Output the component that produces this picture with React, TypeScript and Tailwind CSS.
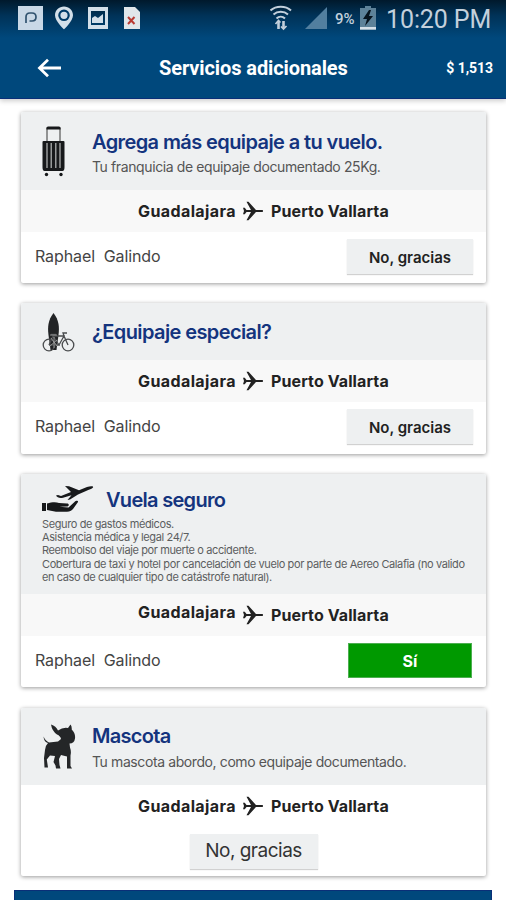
import type { ReactNode } from 'react'

function StatusBar() {
  return (
    <div className="flex h-[38px] items-start bg-linear-to-b from-[#00192c] via-[#003257] via-40% to-[#00487c] pt-[5px] pl-[17px] font-[Roboto,sans-serif] font-normal text-[#c3d0dc]">
      <svg className="h-[26px] w-[124px]" viewBox="0 0 124 26" fill="currentColor">
        <path d="M1 1h25v24H1z" fill="#c9d8e6" />
        <path d="M9 18v-6q0-4 4-4h2q4 0 4 4t-4 4h-2.500" fill="none" stroke="#31536f" strokeWidth="1.700" />
        <path d="M47 1.500c-5 0-9 3.800-9 8.700 0 6 9 14 9 14s9-8 9-14c0-4.900-4-8.700-9-8.700z" fill="#d3dfe9" />
        <circle cx="47" cy="10.300" r="4.700" fill="#d3dfe9" stroke="#003b68" strokeWidth="2.200" />
        <path d="M71 2h20v22H71zm3 4v14h14V6z" fillRule="evenodd" fill="#d3dfe9" />
        <path d="M75 18v-5l3-2 3 2 5-4v9z" fill="#d3dfe9" />
        <path d="M107 2h11l5 5v17h-16z" fill="#e0e6ea" />
        <path d="m111 12 6.500 7m0-7-6.500 7" stroke="#b83a33" strokeWidth="2" />
      </svg>
      <div className="flex-1" />
      <svg className="h-[26px] w-[58px]" viewBox="0 0 58 26" fill="none" stroke="#c3d0dc">
        <path d="M.5 5.500c5.500-5 15-5 20.500 0M3.500 9.500c4-3.600 10.500-3.600 14.500 0M6.500 13.500c2.500-2.300 6-2.300 8.500 0" strokeWidth="2" />
        <path d="M8.500 24v-8M13.500 16v7" strokeWidth="2.600" />
        <path d="m5.500 19 3-3.500 2 2M11 21.500l2.500 2.500 3-3" strokeWidth="1.600" />
        <path d="M57 2v22H35z" fill="#527f9f" stroke="none" />
      </svg>
      <span className="mt-[4px] ml-[7px] w-[23px] text-[15px] leading-[20px] font-medium tracking-[-0.1px] whitespace-nowrap">9%</span>
      <svg className="ml-[2px] h-[26px] w-4" viewBox="0 0 16 26">
        <path d="M5 1h6v2h5v22H0V3h5z" fill="#5d8299" />
        <path d="M0 22h16v2.500H0z" fill="#d5e0e8" />
        <path d="m9 5-6 9h4l-2 7 8-10H9l2-6z" fill="#06131d" />
      </svg>
      <span className="mt-[1px] mr-[14px] ml-[10px] w-[106px] text-[25px] leading-[28px] tracking-[-0.1px] whitespace-nowrap">10:20 PM</span>
    </div>
  )
}

function Header() {
  return (
    <header className="h-[99px] border-b border-[#0a2f78] bg-[#00487c] font-[Roboto,sans-serif] font-bold text-white shadow-[0_2px_5px_rgba(0,0,0,0.2)]">
      <StatusBar />
      <div className="flex h-[60px] items-center pr-[13px] pl-[37px]">
        <svg className="h-[20px] w-[25px]" viewBox="0 0 25 20" fill="none" stroke="currentColor" strokeWidth="2.800">
          <path d="M24 10H2.500M11 1.800 2.500 10l8.500 8.200" />
        </svg>
        <h1 className="ml-[97px] flex-1 text-[20px] tracking-[-0.1px] whitespace-nowrap">Servicios adicionales</h1>
        <span className="text-[14px] tracking-[-0.05px] whitespace-nowrap">$ 1,513</span>
      </div>
    </header>
  )
}

function SuitcaseIcon() {
  return (
    <svg className="h-[51px] w-[23px]" viewBox="0 0 23 51" fill="#17191b">
      <path d="M5 15V2h13v13" fill="none" stroke="#555" strokeWidth="1.200" />
      <path d="M4.500 3.500V2Q4.500.5 6 .5h11q1.500 0 1.500 1.500v1.500z" />
      <path d="M1.500 15h20q1 0 1 1v25q0 4-2 4h-18Q.5 45 .5 41V16q0-1 1-1z" />
      <path d="M5 17v25M9.200 17v25M13.800 17v25M18 17v25" stroke="#b9bbbc" strokeWidth="1.200" />
      <circle cx="4.500" cy="48.500" r="1.700" />
      <circle cx="19" cy="48.500" r="1.700" />
    </svg>
  )
}

function SurfIcon() {
  return (
    <svg className="h-[39px] w-[33px]" viewBox="0 0 33 39" fill="none" stroke="#4a4c4e">
      <path d="M11.500 0C6 7 5.500 14 6.500 22l2 15h6l2-15C17.500 14 17 7 11.500 0z" fill="#222426" stroke="none" />
      <circle cx="7" cy="32" r="5.800" strokeWidth="1.300" />
      <circle cx="26" cy="32" r="5.800" strokeWidth="1.300" />
      <path d="m7 32 4-9 6 9H7m10 0 5-9H11m11 0 4 9m-4-9-1-3h4M9 21.500h5" strokeWidth="1.300" />
      <path d="M12 24v11M9 25l6 8M8 33l7-6M8 22h7" stroke="#aaa" strokeWidth=".8" />
    </svg>
  )
}

function InsuranceIcon() {
  return (
    <svg className="h-[27px] w-[52px]" viewBox="0 0 52 27" fill="#17191b">
      <path d="m23 1 4 .3 10 4 8-3.200c4-1.500 7-.8 6 .4-1 1.500-4 2-7 3.500L36 9.500l-8 5-2.500.5 4-4.800-8.500 2.500c-3 .6-6 .1-7-2.200l2-.4 3 .8 10-4z" />
      <path d="M0 18h4v8H0zM5 18.500c5-1.500 9-1.700 12-.5l8 .5c2.500 0 2.500 3-.5 3l-7 .3 9 .7 6-5.500c2-1.700 4-1.300 3.500 0L31 24c-2 2-3 2.700-6 2.700H14L5 25z" />
    </svg>
  )
}

function DogIcon() {
  return (
    <svg className="h-[46px] w-[34px]" viewBox="0 0 34 46" fill="#242628">
      <path d="M8 .5q5 1.500 7 6 5-3.500 10-2.500L27.500.5q1.500 2 1.200 5 4 4 3.300 9-.7 5-5.500 5l.5 4q1.500 4 .5 8V42l1.500 2.500h-5L24 32.500 18 31l-2 4 .5 6 1 3.500H13l-.5-3-2-3.500L12 32l-5-.5-3.200 4L5 43.500H1.500L1 34l1-8q0-4 3-7Q1 18 .5 12.500q2 4.500 5.500 6l9-1 3-2.500q-.5-3-4-4.500Q9 7 8 .5z" />
    </svg>
  )
}

function PlaneIcon() {
  return (
    <svg className="h-[20px] w-[22px]" viewBox="0 0 22 20" fill="#222">
      <path d="M4.500.800h2L14 9.100h6.200a.9.900 0 0 1 0 1.800H14L6.500 19.200h-2L9 10.900H4.500L2.800 13.300H1L2 10 1 6.700h1.800l1.700 2.400H9z" />
    </svg>
  )
}

function Route({ white, shifted }: { white?: boolean; shifted?: boolean }) {
  return (
    <div className={`flex h-[42px] items-center pl-[117px] text-[16px] font-bold whitespace-nowrap text-[#222] ${white ? 'bg-white' : 'bg-[#f8f8f8]'}`}>
      <span className={`w-[104px] tracking-[0.4px] ${shifted ? 'pb-[6px]' : ''}`}>Guadalajara</span>
      <PlaneIcon />
      <span className="ml-[7px] tracking-[0.1px]">Puerto Vallarta</span>
    </div>
  )
}

function Passenger({ accepted }: { accepted?: boolean }) {
  return (
    <div className="flex justify-between pt-[7px] pr-[14px] pl-[14px] text-[16px]">
      <span className="h-[35px] leading-[35px] tracking-[-0.1px] whitespace-pre text-[#444]">Raphael  Galindo</span>
      {accepted ? (
        <button className="h-[35px] w-[124px] border border-[#4caf50] bg-[#009900] text-[16px] font-bold text-white" type="button">
          Sí
        </button>
      ) : (
        <button className="-mr-px h-[35px] w-[126px] bg-[#eef0f1] pt-[3px] text-[15px] font-semibold text-[#222] shadow-[0_1px_1px_rgba(0,0,0,0.18)]" type="button">
          No, gracias
        </button>
      )}
    </div>
  )
}

function Card({ className, children }: { className: string; children: ReactNode }) {
  return <section className={`overflow-hidden rounded-[2px] bg-white shadow-[0_1px_4px_rgba(0,0,0,0.4)] ${className}`}>{children}</section>
}

export default function App() {
  return (
    <div className="h-[900px] w-[506px] overflow-hidden bg-white font-[Inter,sans-serif]">
      <Header />
      <main className="flex flex-col pt-[13px] pr-5 pl-[21px]">
        <Card className="h-[171px]">
          <div className="flex h-[78px] bg-[#eef0f1] pt-[14px] pl-[21px]">
            <SuitcaseIcon />
            <div className="ml-[27px] whitespace-nowrap">
              <h2 className="mt-[2px] text-[20px] leading-[28px] font-semibold tracking-[-0.6px] text-[#14347e]">Agrega más equipaje a tu vuelo.</h2>
              <p className="text-[14px] leading-[22px] tracking-[-0.39px] text-[#555]">Tu franquicia de equipaje documentado 25Kg.</p>
            </div>
          </div>
          <Route />
          <Passenger />
        </Card>

        <Card className="mt-[20px] h-[151px]">
          <div className="flex h-[57px] bg-[#eef0f1] pt-[10px] pl-[21px]">
            <SurfIcon />
            <h2 className="mt-[5px] ml-[17px] text-[20px] leading-[28px] font-semibold tracking-[-0.6px] whitespace-nowrap text-[#14347e]">¿Equipaje especial?</h2>
          </div>
          <Route />
          <Passenger />
        </Card>

        <Card className="mt-[20px] h-[213px]">
          <div className="h-[120px] bg-[#eef0f1] pt-[11px] pl-[21px]">
            <div className="flex h-[33px]">
              <InsuranceIcon />
              <h2 className="mt-px ml-[12px] text-[20px] leading-[28px] font-semibold tracking-[-0.7px] whitespace-nowrap text-[#14347e]">Vuela seguro</h2>
            </div>
            <p className="text-[11px] leading-[13.200px] tracking-[-0.39px] whitespace-nowrap text-[#5c5e60]">
              Seguro de gastos médicos.
              <br />
              Asistencia médica y legal 24/7.
              <br />
              Reembolso del viaje por muerte o accidente.
              <br />
              Cobertura de taxi y hotel por cancelación de vuelo por parte de Aereo Calafia (no valido
              <br />
              en caso de cualquier tipo de catástrofe natural).
            </p>
          </div>
          <Route shifted />
          <Passenger accepted />
        </Card>

        <Card className="mt-[21px] h-[168px]">
          <div className="flex h-[77px] bg-[#eef0f1] pt-[16px] pl-[22px]">
            <DogIcon />
            <div className="ml-[15px] whitespace-nowrap">
              <h2 className="-mt-[2px] text-[20px] leading-[28px] font-semibold tracking-[-0.7px] text-[#14347e]">Mascota</h2>
              <p className="mt-[1px] text-[14px] leading-[22px] tracking-[-0.4px] text-[#555]">Tu mascota abordo, como equipaje documentado.</p>
            </div>
          </div>
          <Route white />
          <button className="mx-auto mt-[7px] block h-[35px] w-[128px] bg-[#eef0f1] text-[19px] tracking-[-0.5px] text-[#333] shadow-[0_1px_1px_rgba(0,0,0,0.18)]" type="button">
            No, gracias
          </button>
        </Card>
      </main>
      <footer className="mt-[14px] mr-[14px] ml-[14px] h-[30px] border border-[#0a2f78] bg-[#00487c]" />
    </div>
  )
}
